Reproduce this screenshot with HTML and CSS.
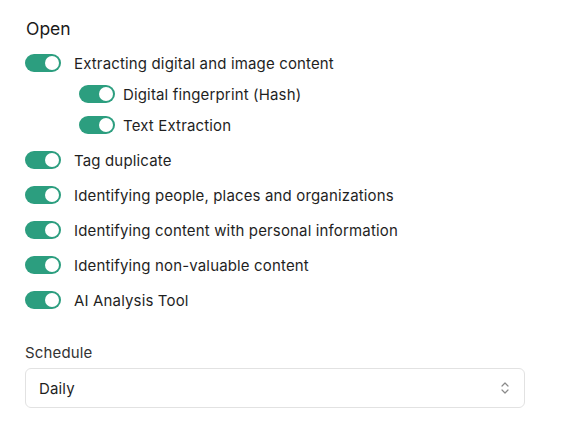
FILE: index.html
```html
<!DOCTYPE html>
<html>
<head>
<meta charset="utf-8">
<link rel="stylesheet" href="styles.css">
</head>
<body>
<div class="panel">
  <h2 class="title">Open</h2>
  <div class="list">
    <div class="row"><span class="toggle"><span class="knob"></span></span><span class="label">Extracting digital and image content</span></div>
    <div class="sub">
      <div class="row subrow"><span class="toggle"><span class="knob"></span></span><span class="label sublabel">Digital fingerprint (Hash)</span></div>
      <div class="row subrow"><span class="toggle"><span class="knob"></span></span><span class="label sublabel">Text Extraction</span></div>
    </div>
    <div class="row"><span class="toggle"><span class="knob"></span></span><span class="label">Tag duplicate</span></div>
    <div class="row"><span class="toggle"><span class="knob"></span></span><span class="label">Identifying people, places and organizations</span></div>
    <div class="row"><span class="toggle"><span class="knob"></span></span><span class="label">Identifying content with personal information</span></div>
    <div class="row"><span class="toggle"><span class="knob"></span></span><span class="label">Identifying non-valuable content</span></div>
    <div class="row"><span class="toggle"><span class="knob"></span></span><span class="label">AI Analysis Tool</span></div>
  </div>
  <div class="field">
    <div class="field-label">Schedule</div>
    <div class="select">
      <span class="select-value">Daily</span>
      <svg class="chev" width="10" height="14" viewBox="0 0 10 14" fill="none" stroke="#8a8a8a" stroke-width="1.2" stroke-linecap="round" stroke-linejoin="round"><path d="M2 5 L5 2 L8 5"/><path d="M2 9 L5 12 L8 9"/></svg>
    </div>
  </div>
</div>
</body>
</html>
```
FILE: styles.css
```css
* { box-sizing: border-box; }
html, body { margin: 0; background: #fff; }
body { font-family: Inter, "Noto Sans", sans-serif; color: #1f1f1f; }
.panel { padding: 17px 37px 0 25px; }
.title { margin: 0 0 13px 1px; font-size: 17.5px; font-weight: 400; line-height: 24px; color: #1a1a1a; }
.list { display: flex; flex-direction: column; gap: 17px; }
.sub { display: flex; flex-direction: column; gap: 13px; padding-left: 54px; margin-top: -4px; }
.row { display: flex; align-items: center; height: 18px; }
.toggle { width: 36px; height: 18px; border-radius: 9px; background: #2c9e7f; position: relative; flex: none; }
.knob { position: absolute; right: 2px; top: 2px; width: 14px; height: 14px; border-radius: 50%; background: #fff; }
.label { margin-left: 13px; font-size: 15px; letter-spacing: 0.15px; color: #1f1f1f; white-space: nowrap; }
.sublabel { margin-left: 8px; }
.field { margin-top: 35px; }
.field-label { font-size: 15px; letter-spacing: 0.15px; line-height: 18px; color: #333; margin-bottom: 6px; }
.select { height: 40px; border: 1px solid #e2e2e2; border-radius: 6px; display: flex; align-items: center; justify-content: space-between; padding: 0 14px 0 13px; }
.select-value { font-size: 15px; letter-spacing: 0.15px; color: #1f1f1f; }
.chev { display: block; }
```
